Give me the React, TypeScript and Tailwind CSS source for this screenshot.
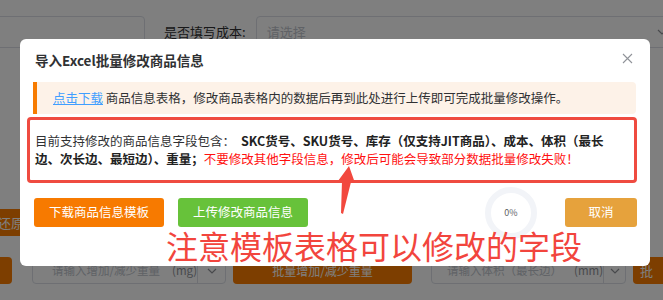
import React from 'react';

const Chevron = () => (
  <svg width="10" height="6" viewBox="0 0 10 6" fill="none">
    <path d="M1 1l4 4 4-4" stroke="#909399" strokeWidth="1.2" />
  </svg>
);

const App: React.FC = () => {
  return (
    <div className="relative h-[300px] w-[663px] overflow-hidden whitespace-nowrap bg-white font-['Noto_Sans_CJK_SC',sans-serif] text-[13px] text-[#606266]">
      {/* --- Page underneath the modal --- */}
      <div className="pt-[16px]">
        <div className="flex items-center">
          <div className="ml-[-10px] h-[32px] w-[155px] shrink-0 rounded border border-[#dcdfe6]" />
          <div className="ml-[19px] shrink-0 text-[#303133]">是否填写成本:</div>
          <div className="ml-[10px] flex h-[32px] w-[420px] shrink-0 items-center justify-between rounded border border-[#dcdfe6] pl-[10px]">
            <span className="text-[#c0c4cc]">请选择</span>
            <span className="mr-[8px]"><Chevron /></span>
          </div>
        </div>

        <div className="mt-[161px] flex">
          <div className="ml-[-30px] flex h-[27px] w-[82px] shrink-0 items-center justify-center rounded bg-[#fa7c00] text-white">还原</div>
        </div>

        <div className="mt-[21px] flex h-[27px] items-stretch text-[11.5px]">
          <div className="ml-[-40px] w-[52px] shrink-0 rounded bg-[#fa7c00]" />
          <div className="ml-[20px] flex w-[194px] shrink-0 items-center rounded border border-[#dcdfe6]">
            <span className="ml-[19px] text-[#c0c4cc]">请输入增加/减少重量</span>
            <span className="ml-[12px] text-[#909399]">(mg)</span>
            <span className="ml-auto flex h-full w-[29px] items-center justify-center border-l border-[#dcdfe6]"><Chevron /></span>
          </div>
          <div className="ml-[7px] flex w-[179px] shrink-0 items-center justify-center rounded bg-[#fa7c00] text-[12px] text-white">批量增加/减少重量</div>
          <div className="ml-[19px] flex w-[195px] shrink-0 items-center rounded border border-[#dcdfe6]">
            <span className="ml-[15px] text-[#c0c4cc]">请输入体积（最长边）</span>
            <span className="ml-[12px] text-[#909399]">(mm)</span>
            <span className="ml-auto flex h-full w-[29px] items-center justify-center border-l border-[#dcdfe6]"><Chevron /></span>
          </div>
          <div className="ml-[7px] flex w-[60px] shrink-0 items-center rounded bg-[#fa7c00] pl-[7px] text-[13px] text-white">批</div>
        </div>
      </div>

      {/* --- Mask --- */}
      <div className="absolute inset-0 bg-black/50" />

      {/* --- Dialog --- */}
      <div className="absolute left-[20px] top-[39px] h-[227px] w-[630px] whitespace-normal rounded-[6px] bg-white">
        <div className="flex items-center justify-between pl-[15px] pr-[17px] pt-[11px]">
          <span className="text-[13.5px] font-bold leading-[20px] text-[#303133]">导入Excel批量修改商品信息</span>
          <svg width="11" height="11" viewBox="0 0 11 11" className="mt-[-4px]">
            <path d="M1 1l9 9M10 1l-9 9" stroke="#909399" strokeWidth="1.1" />
          </svg>
        </div>

        <div className="ml-[13px] mr-[14px] mt-[12px] flex h-[32px] items-center rounded-r-[4px] border-l-4 border-[#f77b00] bg-[#fdf2e8] pl-[16px] text-[12.5px] text-[#303133]">
          <span className="text-[#409eff] underline">点击下载</span>
          <span>&nbsp;商品信息表格，修改商品表格内的数据后再到此处进行上传即可完成批量修改操作。</span>
        </div>

        <div className="ml-[7px] mt-[3px] h-[66px] w-[610px] rounded-[4px] border-[3px] border-[#ef4b40] pl-[5px] pr-[22px] pt-[12px] text-[12.5px] leading-[18px] text-[#303133]">
          目前支持修改的商品信息字段包含：
          <b className="ml-[6px] text-[#222]">SKC货号、SKU货号、库存（仅支持JIT商品）、成本、体积（最长边、次长边、最短边）、重量；</b>
          <span className="text-[#ff1010]">不要修改其他字段信息，修改后可能会导致部分数据批量修改失败！</span>
        </div>

        <div className="mt-[15px] flex h-[29px] items-center pl-[14px]">
          <button className="h-[29px] w-[130px] rounded-[3px] bg-[#f77a00] text-[12.5px] text-white">下载商品信息模板</button>
          <button className="ml-[14px] h-[29px] w-[130px] rounded-[3px] bg-[#67c23a] text-[12.5px] text-white">上传修改商品信息</button>
          <div className="relative ml-[177px] flex h-[52px] w-[52px] items-center justify-center">
            <svg width="52" height="52" viewBox="0 0 52 52" className="absolute inset-0">
              <circle cx="26" cy="26" r="23" fill="none" stroke="#f2f4f8" strokeWidth="6" />
            </svg>
            <span className="relative text-[9px] text-[#606266]">0%</span>
          </div>
          <button className="ml-[28px] h-[29px] w-[72px] rounded-[3px] bg-[#e6a23c] text-[12.5px] text-white">取消</button>
        </div>
      </div>

      {/* --- Annotation --- */}
      <svg className="pointer-events-none absolute inset-0" width="663" height="300">
        <polygon points="349,166 355,183 351,182 343,214 341,213 342,181 338,181" fill="#f2483e" />
      </svg>
      <div className="absolute left-[166px] top-[229px] text-[32px] leading-[32px] text-[#f2453d]">注意模板表格可以修改的字段</div>
    </div>
  );
};

export default App;
